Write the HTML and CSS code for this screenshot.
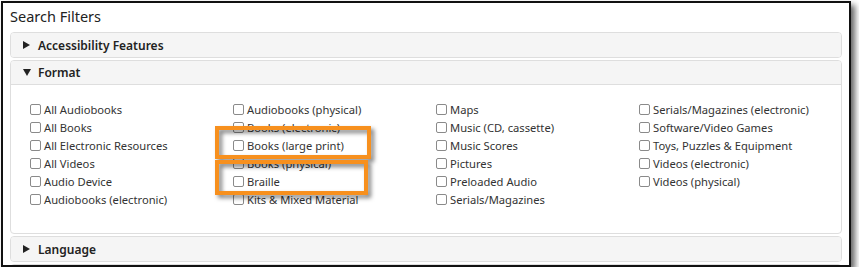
FILE: index.html
```html
<!DOCTYPE html>
<html>
<head>
<meta charset="utf-8">
<link rel="stylesheet" href="styles.css">
</head>
<body>
<div class="frame">
  <h2 class="title">Search Filters</h2>
  <div class="panel">
    <div class="panel-head">
      <svg class="caret" width="8" height="8" viewBox="0 0 8 8"><polygon points="0,0 7,4 0,8" fill="#222"/></svg>
      <span>Accessibility Features</span>
    </div>
  </div>
  <div class="panel open">
    <div class="panel-head">
      <svg class="caret" width="8" height="8" viewBox="0 0 8 8"><polygon points="0,0 8,0 4,7" fill="#222"/></svg>
      <span>Format</span>
    </div>
    <div class="panel-body">
      <ul class="col">
        <li><span class="cb"></span>All Audiobooks</li>
        <li><span class="cb"></span>All Books</li>
        <li><span class="cb"></span>All Electronic Resources</li>
        <li><span class="cb"></span>All Videos</li>
        <li><span class="cb"></span>Audio Device</li>
        <li><span class="cb"></span>Audiobooks (electronic)</li>
      </ul>
      <ul class="col">
        <li><span class="cb"></span>Audiobooks (physical)</li>
        <li><span class="cb"></span>Books (electronic)</li>
        <li><span class="cb"></span>Books (large print)</li>
        <li><span class="cb"></span>Books (physical)</li>
        <li><span class="cb"></span>Braille</li>
        <li><span class="cb"></span>Kits &amp; Mixed Material</li>
      </ul>
      <ul class="col">
        <li><span class="cb"></span>Maps</li>
        <li><span class="cb"></span>Music (CD, cassette)</li>
        <li><span class="cb"></span>Music Scores</li>
        <li><span class="cb"></span>Pictures</li>
        <li><span class="cb"></span>Preloaded Audio</li>
        <li><span class="cb"></span>Serials/Magazines</li>
      </ul>
      <ul class="col">
        <li><span class="cb"></span>Serials/Magazines (electronic)</li>
        <li><span class="cb"></span>Software/Video Games</li>
        <li><span class="cb"></span>Toys, Puzzles &amp; Equipment</li>
        <li><span class="cb"></span>Videos (electronic)</li>
        <li><span class="cb"></span>Videos (physical)</li>
      </ul>
    </div>
  </div>
  <div class="panel">
    <div class="panel-head">
      <svg class="caret" width="8" height="8" viewBox="0 0 8 8"><polygon points="0,0 7,4 0,8" fill="#222"/></svg>
      <span>Language</span>
    </div>
  </div>
  <div class="panel"><div class="panel-head"></div></div>
  <div class="hl hl-1"></div>
  <div class="hl hl-2"></div>
</div>
</body>
</html>
```

FILE: styles.css
```css
* { box-sizing: border-box; }
html, body { margin: 0; padding: 0; background: #fff; }
body {
  font-family: "Noto Sans", "Open Sans", sans-serif;
  color: #333;
}
.frame {
  position: relative;
  margin: 1px 0 0 1px;
  width: 850px;
  height: 266px;
  border: 2px solid #111;
  background: #fff;
  overflow: hidden;
  padding: 3px 7px 0 7px;
  box-shadow: 4px 4px 6px rgba(0,0,0,0.6);
}
.title {
  margin: 0 0 6px 0;
  font-size: 14.5px;
  line-height: 20px;
  font-weight: 400;
  color: #222;
}
.panel {
  border: 1px solid #dedede;
  border-radius: 4px;
  margin-bottom: 2px;
  background: #fff;
}
.panel-head {
  height: 24px;
  background: #f5f5f5;
  display: flex;
  align-items: center;
  padding-left: 12px;
  font-size: 12px;
  font-weight: 600;
  color: #222;
  border-radius: 3px;
}
.caret { margin-right: 7px; flex: none; }
.open .panel-head {
  border-bottom: 1px solid #dedede;
  height: 24px;
  border-radius: 3px 3px 0 0;
}
.panel-body {
  display: grid;
  grid-template-columns: repeat(4, 203px);
  padding: 15px 0 25px 19px;
}
.col {
  list-style: none;
  margin: 0;
  padding: 0;
}
.col li {
  height: 18px;
  display: flex;
  align-items: center;
  font-size: 11.2px;
  color: #333;
  white-space: nowrap;
}
.cb {
  width: 11px;
  height: 11px;
  border: 1px solid #8a8a8a;
  border-radius: 2px;
  margin-right: 3px;
  flex: none;
  background: #fff;
}
.hl {
  position: absolute;
  border: 4px solid #f7901e;
  filter: drop-shadow(3px 3px 2px rgba(0,0,0,0.5));
}
.hl-1 { left: 212px; top: 123px; width: 156px; height: 33px; }
.hl-2 { left: 212px; top: 157px; width: 153px; height: 35px; }
```
